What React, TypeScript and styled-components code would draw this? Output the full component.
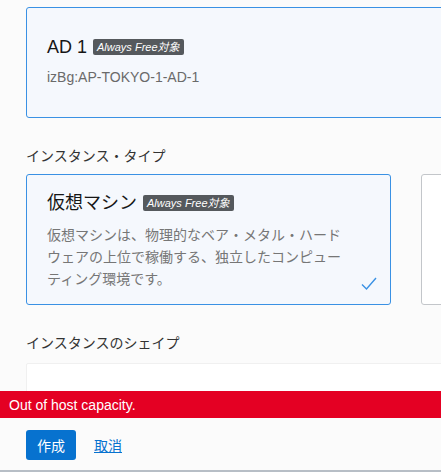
import React from 'react';
import styled, { createGlobalStyle } from 'styled-components';

const GlobalStyle = createGlobalStyle`
  html, body {
    margin: 0;
    padding: 0;
    background: #fbfbfb;
    overflow: hidden;
  }
  body {
    font-family: "Liberation Sans", "Noto Sans CJK JP", sans-serif;
    color: #161616;
  }
`;

const Page = styled.div`
  display: flex;
  flex-direction: column;
  height: 472px;
  overflow: hidden;
`;

const Content = styled.div`
  flex: 1;
  min-height: 0;
  overflow: hidden;
  padding: 7px 0 0 26px;
`;

const Card = styled.div<{ $selected?: boolean; $width: number }>`
  position: relative;
  flex: 0 0 auto;
  box-sizing: border-box;
  width: ${(p) => p.$width}px;
  border: 1px solid ${(p) => (p.$selected ? '#3a91e4' : '#c3c6ca')};
  border-radius: 3px;
  background: ${(p) => (p.$selected ? '#f5f8fd' : '#ffffff')};
`;

const ZoneCard = styled(Card)`
  height: 111px;
  padding: 27px 20px 0;
`;

const TypeCard = styled(Card)`
  height: 131px;
  padding: 16px 20px 0;
`;

const CardRow = styled.div`
  display: flex;
  gap: 30px;
`;

const TitleRow = styled.div`
  display: flex;
  align-items: center;
  gap: 6px;
  font-size: 18px;
  line-height: 24px;
  color: #161616;
`;

const Badge = styled.span`
  display: inline-block;
  height: 16px;
  line-height: 16px;
  padding: 0 4px;
  border-radius: 2px;
  background: #55595d;
  color: #ffffff;
  font-size: 11px;
  font-style: italic;
  white-space: nowrap;
`;

const SubText = styled.div`
  margin-top: 8px;
  font-size: 14px;
  line-height: 20px;
  color: #6a6a6a;
`;

const Description = styled.div`
  margin-top: 9px;
  width: 300px;
  font-size: 14px;
  line-height: 22px;
  color: #767676;
`;

const Check = styled.svg`
  position: absolute;
  right: 13px;
  bottom: 13px;
`;

const SectionLabel = styled.div`
  margin: 28px 0 8px;
  font-size: 14px;
  line-height: 20px;
  color: #333333;
`;

const ShapeBox = styled.div`
  margin-top: 10px;
  width: 600px;
  height: 80px;
  background: #ffffff;
  border: 1px solid #f0f0f0;
  border-radius: 2px;
`;

const ErrorBar = styled.div`
  flex: 0 0 27px;
  display: flex;
  align-items: center;
  padding-left: 9px;
  background: #e40023;
  color: #ffffff;
  font-size: 14px;
`;

const Actions = styled.div`
  flex: 0 0 auto;
  display: flex;
  align-items: center;
  gap: 18px;
  padding: 12px 26px 10px;
  border-bottom: 2px solid #b7bec6;
  background: #fbfbfb;
`;

const PrimaryButton = styled.button`
  height: 30px;
  padding: 0 11px;
  border: none;
  border-radius: 3px;
  background: #0772cf;
  color: #ffffff;
  font-family: inherit;
  font-size: 14px;
`;

const CancelLink = styled.a`
  color: #0772cf;
  font-size: 14px;
  text-decoration: underline;
`;

export default function App() {
  return (
    <>
      <GlobalStyle />
      <Page>
        <Content>
          <ZoneCard $selected $width={600}>
            <TitleRow>
              AD 1<Badge>Always Free対象</Badge>
            </TitleRow>
            <SubText>izBg:AP-TOKYO-1-AD-1</SubText>
          </ZoneCard>

          <SectionLabel>インスタンス・タイプ</SectionLabel>
          <CardRow>
            <TypeCard $selected $width={365}>
              <TitleRow>
                仮想マシン<Badge>Always Free対象</Badge>
              </TitleRow>
              <Description>
                仮想マシンは、物理的なベア・メタル・ハードウェアの上位で稼働する、独立したコンピューティング環境です。
              </Description>
              <Check width="16" height="14" viewBox="0 0 16 14">
                <polyline points="1,7.5 5.5,12 15,1" fill="none" stroke="#3a91e4" strokeWidth="1.4" />
              </Check>
            </TypeCard>
            <TypeCard $width={365} />
          </CardRow>

          <SectionLabel>インスタンスのシェイプ</SectionLabel>
          <ShapeBox />
        </Content>
        <ErrorBar>Out of host capacity.</ErrorBar>
        <Actions>
          <PrimaryButton>作成</PrimaryButton>
          <CancelLink href="#">取消</CancelLink>
        </Actions>
      </Page>
    </>
  );
}
